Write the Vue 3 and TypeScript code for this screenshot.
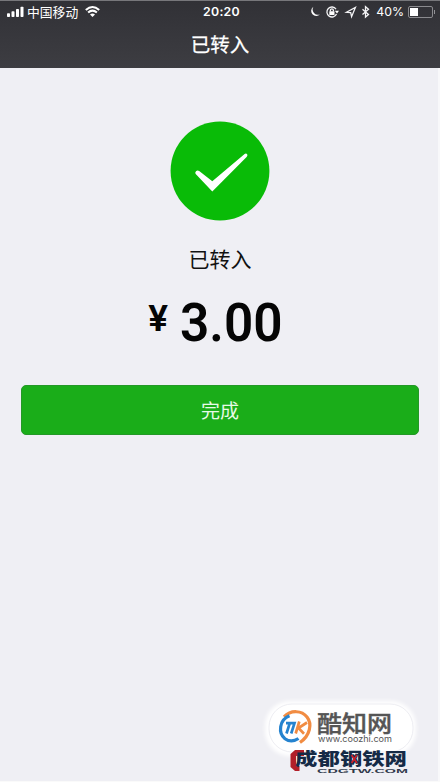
<script setup lang="ts">
const carrier: string = '中国移动'
const time: string = '20:20'
const battery: number = 40
const title: string = '已转入'
const amount: string = (3).toFixed(2)
</script>

<template>
  <main class="screen">
    <header class="header">
      <div class="status">
        <div class="status-left">
          <svg class="signal" width="17" height="12" viewBox="0 0 17 12">
            <rect x="0" y="7.3" width="3" height="3.7" rx=".8" />
            <rect x="4.5" y="5.2" width="3" height="5.8" rx=".8" />
            <rect x="9" y="3" width="3" height="8" rx=".8" />
            <rect x="13.5" y=".7" width="3" height="10.3" rx=".8" />
          </svg>
          <span class="carrier">{{ carrier }}</span>
          <svg class="wifi" width="15" height="12" viewBox="0 0 15 12">
            <path d="M.8 4.1Q7.5-2 14.2 4.1" />
            <path d="M3.1 6.6Q7.5 2.6 11.9 6.6" />
            <path class="dot" d="M5 8.5Q7.5 6.4 10 8.5L7.5 11Z" />
          </svg>
        </div>
        <span class="time">{{ time }}</span>
        <div class="status-right">
          <svg class="indicators" width="63" height="14" viewBox="0 0 63 14">
            <path class="solid" d="M4.4 1.8A5 5 0 1 0 11 9.2 5.2 5.2 0 0 1 4.4 1.8Z" />
            <path d="M27 4.1A5 5 0 1 0 27.5 9" />
            <path class="solid" d="M25.8 5.8h4.2l-2 2.8z" />
            <rect class="solid" x="20.3" y="6.2" width="5.2" height="3.9" rx=".5" />
            <path d="M21.4 6.4V5.3a1.5 1.5 0 0 1 3 0v1.1" />
            <path d="M37.4 7.3 46.4 2.4 42.6 11.7 41.7 7.7Z" />
            <path class="bluetooth" d="m53.5 4.2 6 5.3-3 2.6V1.7l3 2.6-6 5.2" />
          </svg>
          <span class="percent">{{ battery }}%</span>
          <span class="battery"><i :style="{ width: battery + '%' }"></i></span>
        </div>
      </div>
      <h1>{{ title }}</h1>
    </header>

    <section class="result">
      <svg class="success" width="100" height="100" viewBox="0 0 100 100">
        <circle cx="50" cy="50" r="49.4" />
        <path d="M26 50.3Q27.5 48.6 29.2 50.1L42.3 60.2 74.6 33Q76.2 31.8 77.3 33.6 77.8 34.7 76.6 36L42.3 70.6 25.7 53Q24.6 51.7 26 50.3Z" />
      </svg>
      <p class="message">{{ title }}</p>
      <div class="amount"><span class="currency">¥</span><span class="value">{{ amount }}</span></div>
      <button type="button">完成</button>
    </section>

    <aside class="watermark">
      <svg width="180" height="92" viewBox="260 690 180 92">
        <rect class="halo" x="265" y="701" width="151" height="55" rx="25" />
        <rect class="plate" x="269" y="704" width="144" height="48" rx="23" />
        <path class="orange" d="M284 716.8C291 709.5 302 710.5 307 717C312.5 724 310 735.5 300 742.5" />
        <path class="blue" d="M289.5 715.8C279 720 278 733 285 738.7C289.5 742 294 741.5 298.5 738.5" />
        <path class="blue letter" d="M286 723.2h8.5l-3.3 10.3M289.5 724l-3 9.5" />
        <path class="orange letter" d="M299.3 721.5l-3.6 12M307 722.5l-8.5 5.5 5.5 5.8" />
        <text class="brand" x="317" y="731.8" textLength="75" lengthAdjust="spacingAndGlyphs">酷知网</text>
        <text class="domain" x="318" y="742" textLength="74" lengthAdjust="spacingAndGlyphs">www.coozhi.com</text>
        <path class="bracket" d="M304 750h-9l-4.5 4v13l4.5 4h4.5v-5h-3.5v-10h8z" />
        <text class="steel-domain" x="317" y="773" textLength="91" lengthAdjust="spacingAndGlyphs">CDGTW.COM</text>
        <text class="steel" x="295" y="765" textLength="112" lengthAdjust="spacingAndGlyphs">成都钢铁网</text>
        <path class="red-cross" d="m351.5 755 5.5 8m0-8-5.5 8" />
      </svg>
    </aside>
  </main>
</template>

<style>
body {
  margin: 0;
  background: #efeff4;
}
</style>

<style scoped>
.screen {
  position: relative;
  box-sizing: border-box;
  width: 440px;
  height: 782px;
  overflow: hidden;
  background: linear-gradient(to left, #f8f8fa 2px, #efeff4 2px);
  border-bottom: 1px solid #fafafa;
  font-family: "Noto Sans CJK SC", sans-serif;
}

.header {
  width: 440px;
  height: 68px;
  box-sizing: border-box;
  border-top: 1px solid #77777b;
  background: linear-gradient(#313136, #3d3d42);
  color: #fff;
}

.status {
  display: grid;
  grid-template-columns: 1fr 40px 1fr;
  align-items: center;
  height: 21px;
  padding: 0 4px 0 7px;
}

.status-left,
.status-right {
  display: flex;
  align-items: center;
}

.status-left {
  height: 20px;
}

.status-right {
  justify-content: flex-end;
}

.signal,
.dot,
.solid {
  fill: #fff;
}

.carrier {
  margin-left: 3px;
  font-size: 12.8px;
  line-height: 18px;
}

.wifi {
  margin-left: 7px;
  fill: none;
  stroke: #fff;
  stroke-width: 2;
}

.wifi .dot {
  fill: #fff;
  stroke: none;
}

.time {
  text-align: center;
  font: 600 12.3px/20px Inter, sans-serif;
  letter-spacing: .3px;
  white-space: nowrap;
}

.indicators {
  flex: none;
  fill: none;
  stroke: #f4f4f6;
  stroke-width: 1.3;
}

.indicators .solid {
  fill: #fff;
  stroke: none;
}

.percent {
  margin-left: 4px;
  font: 400 12.3px/20px Inter, sans-serif;
}

.battery {
  position: relative;
  box-sizing: border-box;
  width: 25px;
  height: 12px;
  margin: 0 3px 0 4px;
  padding: 1px;
  border: 1px solid #8a8a8e;
  border-radius: 2px;
}

.battery i {
  display: block;
  height: 8px;
  background: #fff;
}

.battery::after {
  content: "";
  position: absolute;
  right: -3px;
  top: 3px;
  width: 1px;
  height: 4px;
  background: #929296;
}

h1 {
  margin: 7px 0 0;
  text-align: center;
  font-size: 19.5px;
  font-weight: 400;
  line-height: 29px;
  -webkit-text-stroke: .25px #fff;
}

.result {
  display: flex;
  flex-direction: column;
  align-items: center;
  width: 440px;
  padding-top: 53px;
}

.success {
  fill: #09bb07;
}

.success path {
  fill: #fff;
}

.message {
  margin: 22px 0 0;
  color: #111;
  font-size: 21px;
  line-height: 30px;
}

.amount {
  display: flex;
  align-items: flex-start;
  height: 64px;
  margin-top: 18px;
  margin-right: 4px;
  color: #050505;
  font-family: Roboto, sans-serif;
  font-weight: 600;
}

.currency {
  margin-right: 12px;
  font-size: 37px;
  line-height: 56px;
}

.value {
  font-size: 54px;
  line-height: 64px;
  transform: scaleX(.95);
  transform-origin: left;
}

button {
  width: 398px;
  height: 50px;
  margin-top: 30px;
  padding: 0 0 1px;
  border: 1px solid #249827;
  border-radius: 5px;
  background: #1aad19;
  color: #e7fae7;
  font: 400 19px/46px "Noto Sans CJK SC", sans-serif;
}

.watermark {
  position: absolute;
  left: 260px;
  top: 690px;
}

.watermark svg {
  display: block;
}

.halo {
  fill: #fff;
  filter: blur(2px);
}

.plate {
  fill: #fff;
  stroke: #ededf2;
}

.orange,
.blue,
.red-cross {
  fill: none;
  stroke: #f18c42;
  stroke-width: 3.2;
}

.blue {
  stroke: #2583cf;
}

.letter {
  stroke-width: 2.7;
}

.brand {
  fill: #555;
  font: 500 22.5px "Noto Sans CJK SC", sans-serif;
  stroke: #555;
  stroke-width: .4;
}

.domain {
  fill: #555;
  font: 9px Inter, sans-serif;
}

.bracket {
  fill: #b21f29;
}

.steel {
  fill: #152a46;
  font: 900 17px "Noto Sans CJK SC", sans-serif;
}

.steel-domain {
  fill: #30394b;
  font: 700 6px "Liberation Sans", sans-serif;
}

.red-cross {
  stroke: #c8202c;
  stroke-width: 1.8;
}
</style>
